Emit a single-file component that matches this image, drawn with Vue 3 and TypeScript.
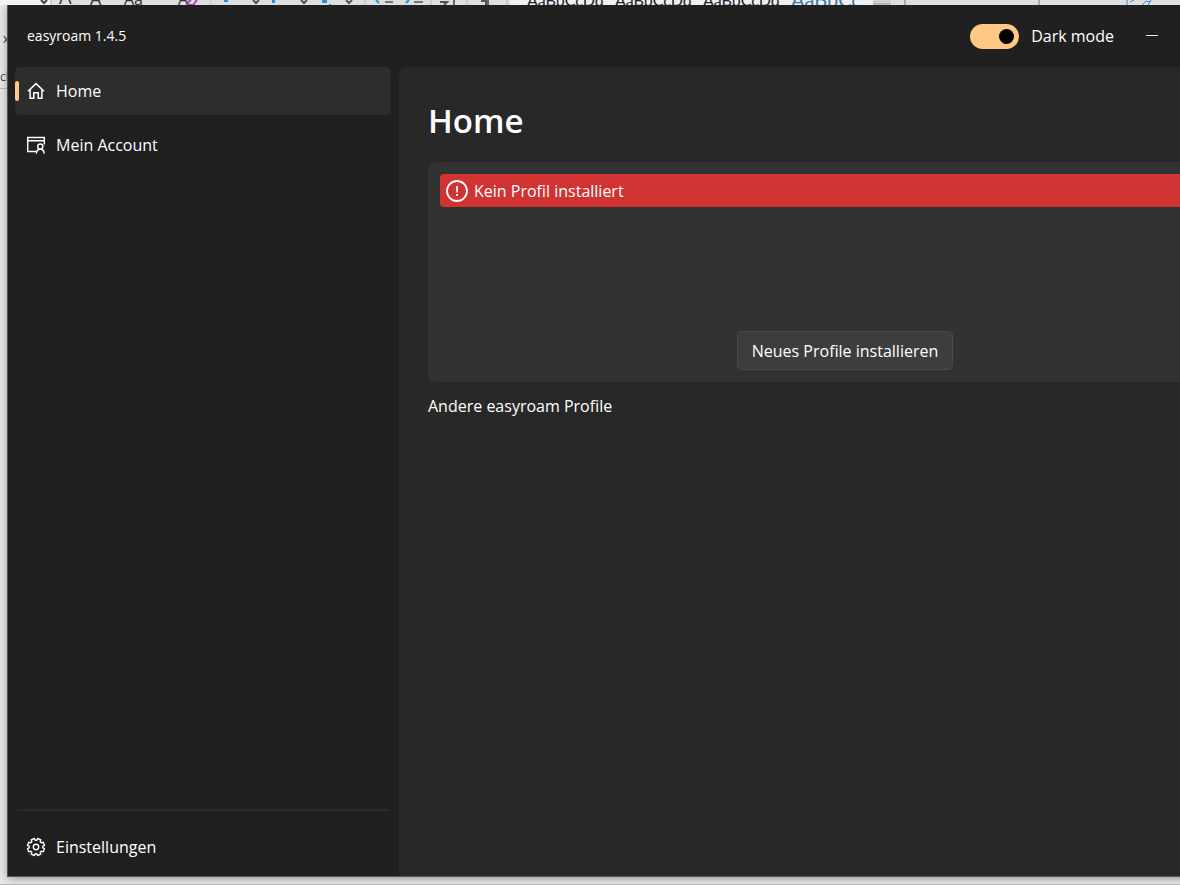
<script setup lang="ts">
import { ref } from 'vue'

const darkMode = ref(true)
const active = ref('home')

interface RibbonItem { text: string; kind: string }

const ribbon: RibbonItem[] = [
  { text: 'A', kind: 'grow' },
  { text: 'A', kind: 'shrink' },
  { text: 'Aa', kind: 'case' },
  { text: 'A', kind: 'clear' },
]
const styleSamples: RibbonItem[] = [
  { text: 'AaBbCcDd', kind: 'plain' },
  { text: 'AaBbCcDd', kind: 'plain' },
  { text: 'AaBbCcDd', kind: 'plain' },
  { text: 'AaBbCc', kind: 'heading' },
]
</script>

<template>
  <div class="desktop">
    <div class="ribbon" aria-hidden="true">
      <div class="strip">
        <svg class="marks" width="59" height="5" viewBox="0 0 59 5" fill="none">
          <path d="M0 0h51v5H0z" fill="#f2f2f2" />
          <path d="m41 0 3 3 3-3" stroke="#444" stroke-width="2" />
          <path d="M51 0v5" stroke="#b8b8b8" />
        </svg>
        <div class="fonts">
          <span v-for="item in ribbon" :key="item.kind" class="glyph" :class="item.kind">{{ item.text }}</span>
          <svg class="eraser" width="24" height="5" viewBox="0 0 24 5" fill="none">
            <path d="m1 3 4-3M1 3l3 2h3l4-5" stroke="#a044b8" stroke-width="2" />
          </svg>
        </div>
        <svg class="marks" width="300" height="5" viewBox="0 0 300 5" fill="none">
          <path d="M14 0h4v2h-4zM62 0h3v3h-3zM112 0h5v3h-5zM119 4h2v1h-2z" fill="#2b8fd0" />
          <path d="m43 0 3 3 3-3M91 0l3 3 3-3M136 0l3 3 3-3" stroke="#555" stroke-width="2" />
          <path d="m166 0 3 3M199 0l-3 3" stroke="#2b8fd0" stroke-width="2" />
          <path d="M175 2h8M204 2h9" stroke="#777" stroke-width="2" />
          <path d="M230 2h7l-3 3M271 1h5v4" stroke="#555" stroke-width="2" />
          <path d="M244 0v5M278 0v5" stroke="#666" stroke-width="2" />
          <path d="M0 0v5M155 0v5M221 0v5M257 0v5M297 0v5" stroke="#b8b8b8" />
        </svg>
        <div class="samples">
          <span v-for="(item, i) in styleSamples" :key="i" class="sample" :class="item.kind">{{ item.text }}</span>
        </div>
        <svg class="marks" width="307" height="5" viewBox="0 0 307 5" fill="none">
          <path d="M0 0h18v4H0z" fill="#d0d0d0" />
          <path d="M0 4h18" stroke="#999" />
          <path d="M32 0v5M166 0v5" stroke="#aaa" stroke-width="2" />
          <path d="M254 0v5M257 2l4-2M269 5l4-4 3 1 2-2M275 5l3-5" stroke="#4d82dc" />
        </svg>
      </div>
      <div class="edge">
        <span class="edge-x">x</span>
        <span class="edge-c">cl</span>
      </div>
    </div>

    <div class="window">
      <header class="titlebar">
        <span class="app-name">easyroam 1.4.5</span>
        <label class="mode">
          <input v-model="darkMode" class="switch" type="checkbox" role="switch" />
          <span>Dark mode</span>
        </label>
        <button class="minimize" type="button" aria-label="Minimieren">
          <svg width="12" height="12" viewBox="0 0 12 12"><path d="M0 5.5h12" stroke="#e8e8e8" /></svg>
        </button>
      </header>

      <div class="body">
        <nav class="sidebar">
          <button class="nav-item" :class="{ active: active === 'home' }" type="button" @click="active = 'home'">
            <svg class="icon" viewBox="0 0 20 20" fill="none" stroke="currentColor" stroke-width="1.5">
              <path d="M2 10.2 10 2.6l8 7.6M4.1 8.5v8.8h3.7v-5.5h4.4v5.5h3.7V8.5" />
            </svg>
            <span>Home</span>
          </button>
          <button class="nav-item" :class="{ active: active === 'account' }" type="button" @click="active = 'account'">
            <svg class="icon" viewBox="0 0 20 20" fill="none" stroke="currentColor" stroke-width="1.4">
              <path d="M10 16.5H1.7v-14h16.6v7M1.7 5.8h16.6" />
              <circle cx="14.3" cy="11.6" r="2.6" />
              <path d="M10.4 18.6c.1-2.6 1.7-4.3 3.9-4.3s3.8 1.7 3.9 4.3" />
            </svg>
            <span>Mein Account</span>
          </button>
          <div class="nav-bottom">
            <button class="nav-item" :class="{ active: active === 'settings' }" type="button" @click="active = 'settings'">
              <svg class="icon" viewBox="0 0 20 20" fill="none" stroke="currentColor" stroke-width="1.4" stroke-linejoin="round">
                <path d="m8.3 1.5.9 1.7h1.6l.9-1.7 3.1 1.3-.6 1.9 1.1 1.1 1.9-.6 1.3 3.1-1.7.9v1.6l1.7.9-1.3 3.1-1.9-.6-1.1 1.1.6 1.9-3.1 1.3-.9-1.7H9.2l-.9 1.7-3.1-1.3.6-1.9-1.1-1.1-1.9.6-1.3-3.1 1.7-.9V9.2l-1.7-.9 1.3-3.1 1.9.6 1.1-1.1-.6-1.9z" />
                <circle cx="10" cy="10" r="2.7" />
              </svg>
              <span>Einstellungen</span>
            </button>
          </div>
        </nav>

        <main class="content">
          <h1>Home</h1>
          <section class="card">
            <div class="alert" role="alert">
              <svg width="24" height="24" viewBox="0 0 24 24" fill="none" stroke="#fff">
                <circle cx="12" cy="12" r="10" stroke-width="1.8" />
                <path d="M12 7v6.5M12 15v2" stroke-width="1.8" />
              </svg>
              <span>Kein Profil installiert</span>
            </div>
            <button class="install" type="button">Neues Profile installieren</button>
          </section>
          <p class="others">Andere easyroam Profile</p>
        </main>
      </div>
    </div>
  </div>
</template>

<style>
body {
  margin: 0;
  background: #e6e6e6;
}
</style>

<style scoped>
* {
  box-sizing: border-box;
}

.desktop {
  position: relative;
  display: flex;
  flex-direction: column;
  min-height: 100vh;
  padding: 5px 0 8px 8px;
  overflow: hidden;
  background: #e6e6e6;
  border-bottom: 1px solid #b4b4b4;
  font-family: "Open Sans", "Noto Sans", sans-serif;
  font-size: 16px;
  line-height: 24px;
  color: #fff;
}

.ribbon {
  position: absolute;
  inset: 0;
}

.strip {
  display: flex;
  height: 5px;
  overflow: hidden;
  background: #dedede;
  color: #333;
}

.fonts {
  display: flex;
  align-items: flex-end;
  flex: none;
  width: 151px;
  line-height: 12px;
}

.glyph {
  flex: none;
}

.grow {
  width: 31px;
  font-size: 20px;
  line-height: 16px;
}

.shrink {
  width: 34px;
  font-size: 18px;
  line-height: 14px;
}

.case {
  width: 54px;
}

.clear {
  width: 8px;
}

.eraser,
.marks {
  flex: none;
}

.samples {
  display: flex;
  align-items: flex-end;
  flex: none;
  width: 363px;
  padding-left: 17px;
  background: #f0f0f0;
  font-family: Lato, sans-serif;
  line-height: 10px;
  color: #222;
}

.sample {
  flex: none;
  width: 88px;
}

.heading {
  width: 80px;
  font-size: 20px;
  line-height: 12px;
  color: #4472b0;
}

.edge {
  display: flex;
  flex-direction: column;
  width: 8px;
  height: 84px;
  padding-top: 20px;
  overflow: hidden;
  border-bottom: 1px solid #bbb;
  font-size: 12px;
  color: #444;
}

.edge-x {
  padding-left: 3px;
  line-height: 28px;
}

.edge-c {
  line-height: 48px;
}

.window {
  position: relative;
  display: flex;
  flex-direction: column;
  flex: 1;
  margin-right: -111px;
  background: #202020;
  box-shadow: 0 0 0 1px #555, 0 2px 8px rgba(0, 0, 0, 0.4);
  clip-path: inset(0 0 -8px -8px);
}

.titlebar {
  display: flex;
  align-items: center;
  height: 62px;
  padding: 0 111px 0 19px;
}

.app-name {
  flex: 1;
  font-size: 14px;
}

.mode {
  display: flex;
  align-items: center;
  gap: 12px;
}

.switch {
  appearance: none;
  display: flex;
  align-items: center;
  justify-content: flex-start;
  width: 49px;
  height: 25px;
  margin: 0;
  padding: 0 5px;
  border-radius: 13px;
  background: #555;
}

.switch::before {
  content: "";
  width: 15px;
  height: 15px;
  border-radius: 50%;
  background: #000;
}

.switch:checked {
  justify-content: flex-end;
  background: #ffc885;
}

.minimize {
  display: grid;
  place-items: center;
  width: 56px;
  height: 40px;
  margin-left: 10px;
  padding: 0;
  border: 0;
  background: none;
}

.body {
  display: flex;
  flex: 1;
}

.sidebar {
  display: flex;
  flex-direction: column;
  flex: none;
  width: 391px;
  gap: 6px;
  padding: 0 8px 5px 7px;
}

.nav-item {
  position: relative;
  display: flex;
  align-items: center;
  gap: 10px;
  width: 100%;
  height: 48px;
  padding: 0 11px;
  border: 0;
  border-radius: 5px;
  background: none;
  color: inherit;
  font: inherit;
}

.nav-item.active {
  background: #2d2d2d;
}

.nav-item.active::before {
  content: "";
  position: absolute;
  left: 0;
  top: 14px;
  width: 4px;
  height: 20px;
  border-radius: 2px;
  background: #ffc885;
}

.icon {
  width: 20px;
  height: 20px;
}

.nav-bottom {
  margin-top: auto;
}

.nav-bottom::before {
  content: "";
  display: block;
  height: 2px;
  margin: 0 2px 12px;
  background: #2b2b2b;
}

.content {
  flex: 1;
  padding: 30px 29px;
  border-radius: 9px 0 0 0;
  background: #282828;
}

h1 {
  margin: 0 0 17px;
  font-size: 33px;
  font-weight: 600;
  line-height: 48px;
}

.card {
  display: flex;
  flex-direction: column;
  align-items: center;
  justify-content: space-between;
  min-height: 220px;
  padding: 12px;
  border-radius: 7px;
  background: #323232;
}

.alert {
  display: flex;
  align-items: center;
  align-self: stretch;
  gap: 5px;
  height: 33px;
  padding: 0 5px;
  border-radius: 4px;
  background: #d13232;
}

.install {
  height: 39px;
  padding: 0 14px;
  border: 1px solid #4a4a4a;
  border-radius: 5px;
  background: #3d3d3d;
  color: inherit;
  font: inherit;
}

.others {
  margin: 12px 0 0;
}
</style>
